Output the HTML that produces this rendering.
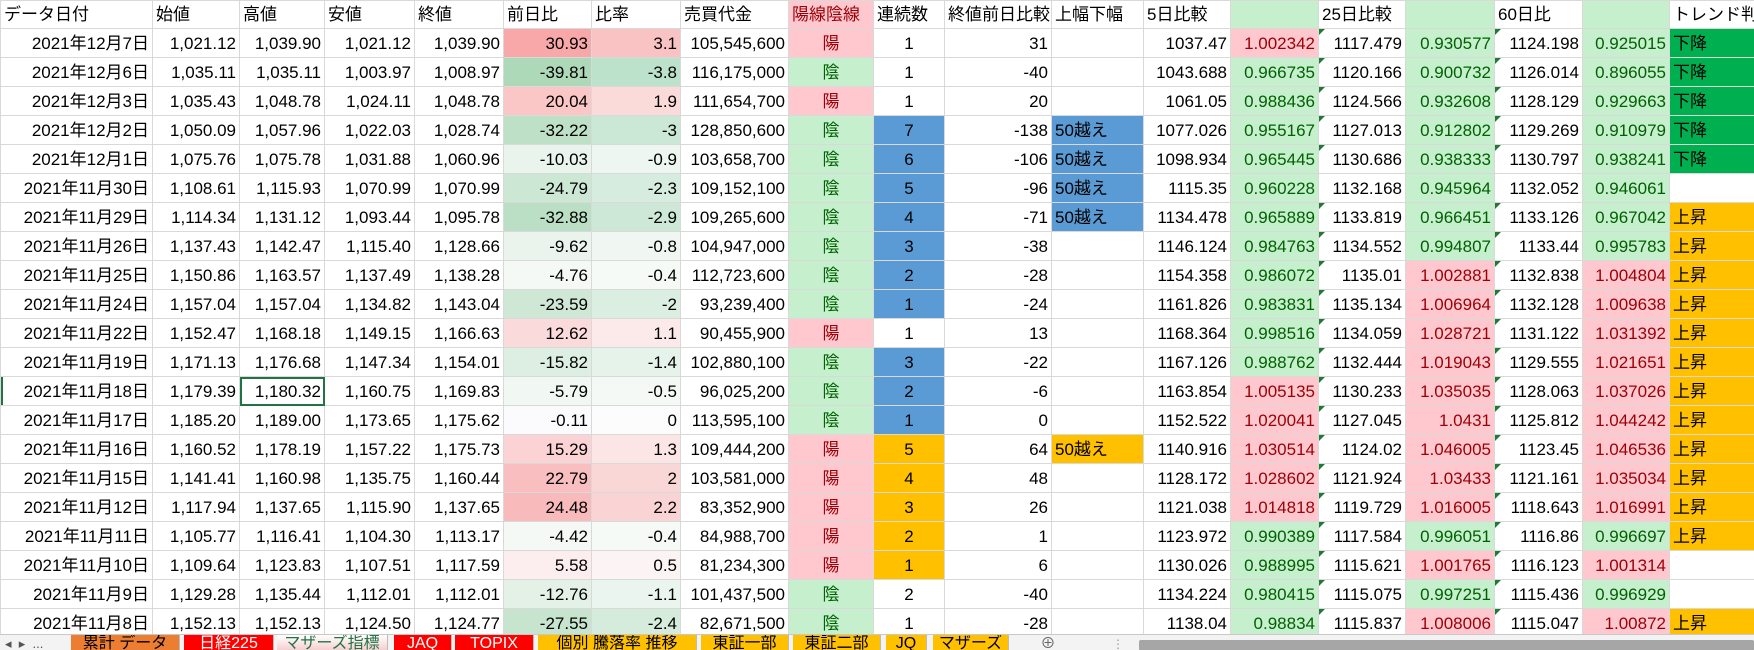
<!DOCTYPE html>
<html><head><meta charset="utf-8">
<style>
*{margin:0;padding:0;box-sizing:border-box}
body{width:1754px;height:650px;overflow:hidden;background:#fff;font-family:"Liberation Sans","Noto Sans CJK JP",sans-serif;font-size:17px;color:#000;position:relative}
table{position:absolute;left:0;top:0;border-collapse:collapse;table-layout:fixed;width:1754px}
td{border:1px solid #d9d9d9;height:29px;padding:0 3px;white-space:nowrap;overflow:hidden;text-align:right;position:relative;line-height:27px}
tr.h td{height:28px;text-align:left}
td.l{text-align:left}td.c{text-align:center}
.y{background:#ffc7ce;color:#9c0006;text-align:center}
.n{background:#c6efce;color:#006100;text-align:center}
.b{background:#5b9bd5}.o{background:#ffc000}
.p{background:#ffc7ce;color:#9c0006}.g{background:#c6efce;color:#006100}
.dn{background:#00b050;text-align:left}.up{background:#ffc000;text-align:left}
.t::before{content:"";position:absolute;left:0;top:0;border-top:6px solid #1e7b34;border-right:6px solid transparent}
.sel{outline:2px solid #217346;outline-offset:-2px}
#tabs{position:absolute;left:0;top:634px;width:1754px;height:16px;background:#f3f3f3;border-top:1px solid #c8c8c8;overflow:hidden}
.tab{position:absolute;top:0;height:16px;font-size:16px;line-height:18px;text-align:center;overflow:hidden;border-right:1px solid #bbb}
</style></head><body>
<table>
<colgroup><col style="width:152px"><col style="width:87px"><col style="width:85px"><col style="width:90px"><col style="width:89px"><col style="width:88px"><col style="width:89px"><col style="width:108px"><col style="width:85px"><col style="width:71px"><col style="width:107px"><col style="width:92px"><col style="width:87px"><col style="width:88px"><col style="width:87px"><col style="width:89px"><col style="width:88px"><col style="width:87px"><col style="width:85px"></colgroup>
<tr class="h"><td>データ日付</td><td>始値</td><td>高値</td><td>安値</td><td>終値</td><td>前日比</td><td>比率</td><td>売買代金</td><td style="background:#ffc7ce;color:#9c0006">陽線陰線</td><td>連続数</td><td>終値前日比較</td><td>上幅下幅</td><td>5日比較</td><td style="background:#c6efce"></td><td>25日比較</td><td style="background:#c6efce"></td><td>60日比</td><td style="background:#c6efce"></td><td>トレンド判</td></tr>
<tr><td>2021年12月7日</td><td>1,021.12</td><td>1,039.90</td><td>1,021.12</td><td>1,039.90</td><td style="background:#f8a8a9">30.93</td><td style="background:#f9c3c3">3.1</td><td>105,545,600</td><td class="y">陽</td><td class="c">1</td><td>31</td><td></td><td>1037.47</td><td class="p">1.002342</td><td class="t">1117.479</td><td class="g">0.930577</td><td class="t">1124.198</td><td class="g">0.925015</td><td class="dn">下降</td></tr>
<tr><td>2021年12月6日</td><td>1,035.11</td><td>1,035.11</td><td>1,003.97</td><td>1,008.97</td><td style="background:#aed9b9">-39.81</td><td style="background:#bde2cb">-3.8</td><td>116,175,000</td><td class="n">陰</td><td class="c">1</td><td>-40</td><td></td><td>1043.688</td><td class="g">0.966735</td><td class="t">1120.166</td><td class="g">0.900732</td><td class="t">1126.014</td><td class="g">0.896055</td><td class="dn">下降</td></tr>
<tr><td>2021年12月3日</td><td>1,035.43</td><td>1,048.78</td><td>1,024.11</td><td>1,048.78</td><td style="background:#fac6c6">20.04</td><td style="background:#fbdada">1.9</td><td>111,654,700</td><td class="y">陽</td><td class="c">1</td><td>20</td><td></td><td>1061.05</td><td class="g">0.988436</td><td class="t">1124.566</td><td class="g">0.932608</td><td class="t">1128.129</td><td class="g">0.929663</td><td class="dn">下降</td></tr>
<tr><td>2021年12月2日</td><td>1,050.09</td><td>1,057.96</td><td>1,022.03</td><td>1,028.74</td><td style="background:#bde0c6">-32.22</td><td style="background:#cbe7d5">-3</td><td>128,850,600</td><td class="n">陰</td><td class="c b">7</td><td>-138</td><td class="l b">50越え</td><td>1077.026</td><td class="g">0.955167</td><td class="t">1127.013</td><td class="g">0.912802</td><td class="t">1129.269</td><td class="g">0.910979</td><td class="dn">下降</td></tr>
<tr><td>2021年12月1日</td><td>1,075.76</td><td>1,075.78</td><td>1,031.88</td><td>1,060.96</td><td style="background:#e9f4ec">-10.03</td><td style="background:#eef6f1">-0.9</td><td>103,658,700</td><td class="n">陰</td><td class="c b">6</td><td>-106</td><td class="l b">50越え</td><td>1098.934</td><td class="g">0.965445</td><td class="t">1130.686</td><td class="g">0.938333</td><td class="t">1130.797</td><td class="g">0.938241</td><td class="dn">下降</td></tr>
<tr><td>2021年11月30日</td><td>1,108.61</td><td>1,115.93</td><td>1,070.99</td><td>1,070.99</td><td style="background:#cce7d3">-24.79</td><td style="background:#d6ecde">-2.3</td><td>109,152,100</td><td class="n">陰</td><td class="c b">5</td><td>-96</td><td class="l b">50越え</td><td>1115.35</td><td class="g">0.960228</td><td>1132.168</td><td class="g">0.945964</td><td>1132.052</td><td class="g">0.946061</td><td></td></tr>
<tr><td>2021年11月29日</td><td>1,114.34</td><td>1,131.12</td><td>1,093.44</td><td>1,095.78</td><td style="background:#bbdfc5">-32.88</td><td style="background:#cde8d7">-2.9</td><td>109,265,600</td><td class="n">陰</td><td class="c b">4</td><td>-71</td><td class="l b">50越え</td><td>1134.478</td><td class="g">0.965889</td><td class="t">1133.819</td><td class="g">0.966451</td><td class="t">1133.126</td><td class="g">0.967042</td><td class="up">上昇</td></tr>
<tr><td>2021年11月26日</td><td>1,137.43</td><td>1,142.47</td><td>1,115.40</td><td>1,128.66</td><td style="background:#eaf4ed">-9.62</td><td style="background:#f0f7f2">-0.8</td><td>104,947,000</td><td class="n">陰</td><td class="c b">3</td><td>-38</td><td></td><td>1146.124</td><td class="g">0.984763</td><td class="t">1134.552</td><td class="g">0.994807</td><td class="t">1133.44</td><td class="g">0.995783</td><td class="up">上昇</td></tr>
<tr><td>2021年11月25日</td><td>1,150.86</td><td>1,163.57</td><td>1,137.49</td><td>1,138.28</td><td style="background:#f4f9f5">-4.76</td><td style="background:#f6faf7">-0.4</td><td>112,723,600</td><td class="n">陰</td><td class="c b">2</td><td>-28</td><td></td><td>1154.358</td><td class="g">0.986072</td><td class="t">1135.01</td><td class="p">1.002881</td><td class="t">1132.838</td><td class="p">1.004804</td><td class="up">上昇</td></tr>
<tr><td>2021年11月24日</td><td>1,157.04</td><td>1,157.04</td><td>1,134.82</td><td>1,143.04</td><td style="background:#cee8d5">-23.59</td><td style="background:#dbeee2">-2</td><td>93,239,400</td><td class="n">陰</td><td class="c b">1</td><td>-24</td><td></td><td>1161.826</td><td class="g">0.983831</td><td class="t">1135.134</td><td class="p">1.006964</td><td class="t">1132.128</td><td class="p">1.009638</td><td class="up">上昇</td></tr>
<tr><td>2021年11月22日</td><td>1,152.47</td><td>1,168.18</td><td>1,149.15</td><td>1,166.63</td><td style="background:#fbdadb">12.62</td><td style="background:#fce9e9">1.1</td><td>90,455,900</td><td class="y">陽</td><td class="c">1</td><td>13</td><td></td><td>1168.364</td><td class="g">0.998516</td><td class="t">1134.059</td><td class="p">1.028721</td><td class="t">1131.122</td><td class="p">1.031392</td><td class="up">上昇</td></tr>
<tr><td>2021年11月19日</td><td>1,171.13</td><td>1,176.68</td><td>1,147.34</td><td>1,154.01</td><td style="background:#ddefe2">-15.82</td><td style="background:#e5f3ea">-1.4</td><td>102,880,100</td><td class="n">陰</td><td class="c b">3</td><td>-22</td><td></td><td>1167.126</td><td class="g">0.988762</td><td class="t">1132.444</td><td class="p">1.019043</td><td class="t">1129.555</td><td class="p">1.021651</td><td class="up">上昇</td></tr>
<tr><td style="box-shadow:inset 2px 0 0 #217346">2021年11月18日</td><td>1,179.39</td><td class="sel">1,180.32</td><td>1,160.75</td><td>1,169.83</td><td style="background:#f1f8f3">-5.79</td><td style="background:#f5f9f6">-0.5</td><td>96,025,200</td><td class="n">陰</td><td class="c b">2</td><td>-6</td><td></td><td>1163.854</td><td class="p">1.005135</td><td class="t">1130.233</td><td class="p">1.035035</td><td class="t">1128.063</td><td class="p">1.037026</td><td class="up">上昇</td></tr>
<tr><td>2021年11月17日</td><td>1,185.20</td><td>1,189.00</td><td>1,173.65</td><td>1,175.62</td><td style="background:#fbfbfd">-0.11</td><td style="background:#fcfcfd">0</td><td>113,595,100</td><td class="n">陰</td><td class="c b">1</td><td>0</td><td></td><td>1152.522</td><td class="p">1.020041</td><td class="t">1127.045</td><td class="p">1.0431</td><td class="t">1125.812</td><td class="p">1.044242</td><td class="up">上昇</td></tr>
<tr><td>2021年11月16日</td><td>1,160.52</td><td>1,178.19</td><td>1,157.22</td><td>1,175.73</td><td style="background:#fbd3d4">15.29</td><td style="background:#fbe5e5">1.3</td><td>109,444,200</td><td class="y">陽</td><td class="c o">5</td><td>64</td><td class="l o">50越え</td><td>1140.916</td><td class="p">1.030514</td><td class="t">1124.02</td><td class="p">1.046005</td><td class="t">1123.45</td><td class="p">1.046536</td><td class="up">上昇</td></tr>
<tr><td>2021年11月15日</td><td>1,141.41</td><td>1,160.98</td><td>1,135.75</td><td>1,160.44</td><td style="background:#f9bebf">22.79</td><td style="background:#fad7d7">2</td><td>103,581,000</td><td class="y">陽</td><td class="c o">4</td><td>48</td><td></td><td>1128.172</td><td class="p">1.028602</td><td class="t">1121.924</td><td class="p">1.03433</td><td class="t">1121.161</td><td class="p">1.035034</td><td class="up">上昇</td></tr>
<tr><td>2021年11月12日</td><td>1,117.94</td><td>1,137.65</td><td>1,115.90</td><td>1,137.65</td><td style="background:#f9babb">24.48</td><td style="background:#fad4d4">2.2</td><td>83,352,900</td><td class="y">陽</td><td class="c o">3</td><td>26</td><td></td><td>1121.038</td><td class="p">1.014818</td><td class="t">1119.729</td><td class="p">1.016005</td><td class="t">1118.643</td><td class="p">1.016991</td><td class="up">上昇</td></tr>
<tr><td>2021年11月11日</td><td>1,105.77</td><td>1,116.41</td><td>1,104.30</td><td>1,113.17</td><td style="background:#f4f9f6">-4.42</td><td style="background:#f6faf7">-0.4</td><td>84,988,700</td><td class="y">陽</td><td class="c o">2</td><td>1</td><td></td><td>1123.972</td><td class="g">0.990389</td><td class="t">1117.584</td><td class="g">0.996051</td><td class="t">1116.86</td><td class="g">0.996697</td><td class="up">上昇</td></tr>
<tr><td>2021年11月10日</td><td>1,109.64</td><td>1,123.83</td><td>1,107.51</td><td>1,117.59</td><td style="background:#fceeee">5.58</td><td style="background:#fcf4f4">0.5</td><td>81,234,300</td><td class="y">陽</td><td class="c o">1</td><td>6</td><td></td><td>1130.026</td><td class="g">0.988995</td><td class="t">1115.621</td><td class="p">1.001765</td><td class="t">1116.123</td><td class="p">1.001314</td><td></td></tr>
<tr><td>2021年11月9日</td><td>1,129.28</td><td>1,135.44</td><td>1,112.01</td><td>1,112.01</td><td style="background:#e4f1e7">-12.76</td><td style="background:#ebf5ef">-1.1</td><td>101,437,500</td><td class="n">陰</td><td class="c">2</td><td>-40</td><td></td><td>1134.224</td><td class="g">0.980415</td><td class="t">1115.075</td><td class="g">0.997251</td><td class="t">1115.436</td><td class="g">0.996929</td><td></td></tr>
<tr><td>2021年11月8日</td><td>1,152.13</td><td>1,152.13</td><td>1,124.50</td><td>1,124.77</td><td style="background:#c6e4ce">-27.55</td><td style="background:#d5ecdd">-2.4</td><td>82,671,500</td><td class="n">陰</td><td class="c">1</td><td>-28</td><td></td><td>1138.04</td><td class="g">0.98834</td><td class="t">1115.837</td><td class="p">1.008006</td><td class="t">1115.047</td><td class="p">1.00872</td><td class="up">上昇</td></tr>
</table>
<div id="tabs">
<div class="tab" style="left:0;width:66px;border:none;color:#555;font-size:13px;text-align:left;padding-left:5px">◂ &nbsp;▸ &nbsp;...</div>
<div class="tab" style="left:71px;width:109px;background:#ed7d31">累計 データ</div>
<div class="tab" style="left:184px;width:90px;background:#ff0000;color:#fff">日経225</div>
<div class="tab" style="left:277px;width:111px;background:linear-gradient(#fff,#f6cccc);color:#217346">マザーズ指標</div>
<div class="tab" style="left:394px;width:58px;background:#ff0000;color:#fff">JAQ</div>
<div class="tab" style="left:455px;width:79px;background:#ff0000;color:#fff">TOPIX</div>
<div class="tab" style="left:538px;width:159px;background:#ffc000">個別 騰落率 推移</div>
<div class="tab" style="left:701px;width:88px;background:#ffc000">東証一部</div>
<div class="tab" style="left:793px;width:88px;background:#ffc000">東証二部</div>
<div class="tab" style="left:886px;width:41px;background:#ffc000">JQ</div>
<div class="tab" style="left:933px;width:76px;background:#ffc000">マザーズ</div>
<div class="tab" style="left:1038px;width:20px;border:none;color:#666;font-size:15px">⊕</div>
<div class="tab" style="left:1112px;width:10px;border:none;color:#999;font-size:12px">⋮</div>
<div style="position:absolute;left:1139px;top:5px;width:615px;height:11px;background:#a6a6a6;border-radius:2px"></div>
</div>
</body></html>
